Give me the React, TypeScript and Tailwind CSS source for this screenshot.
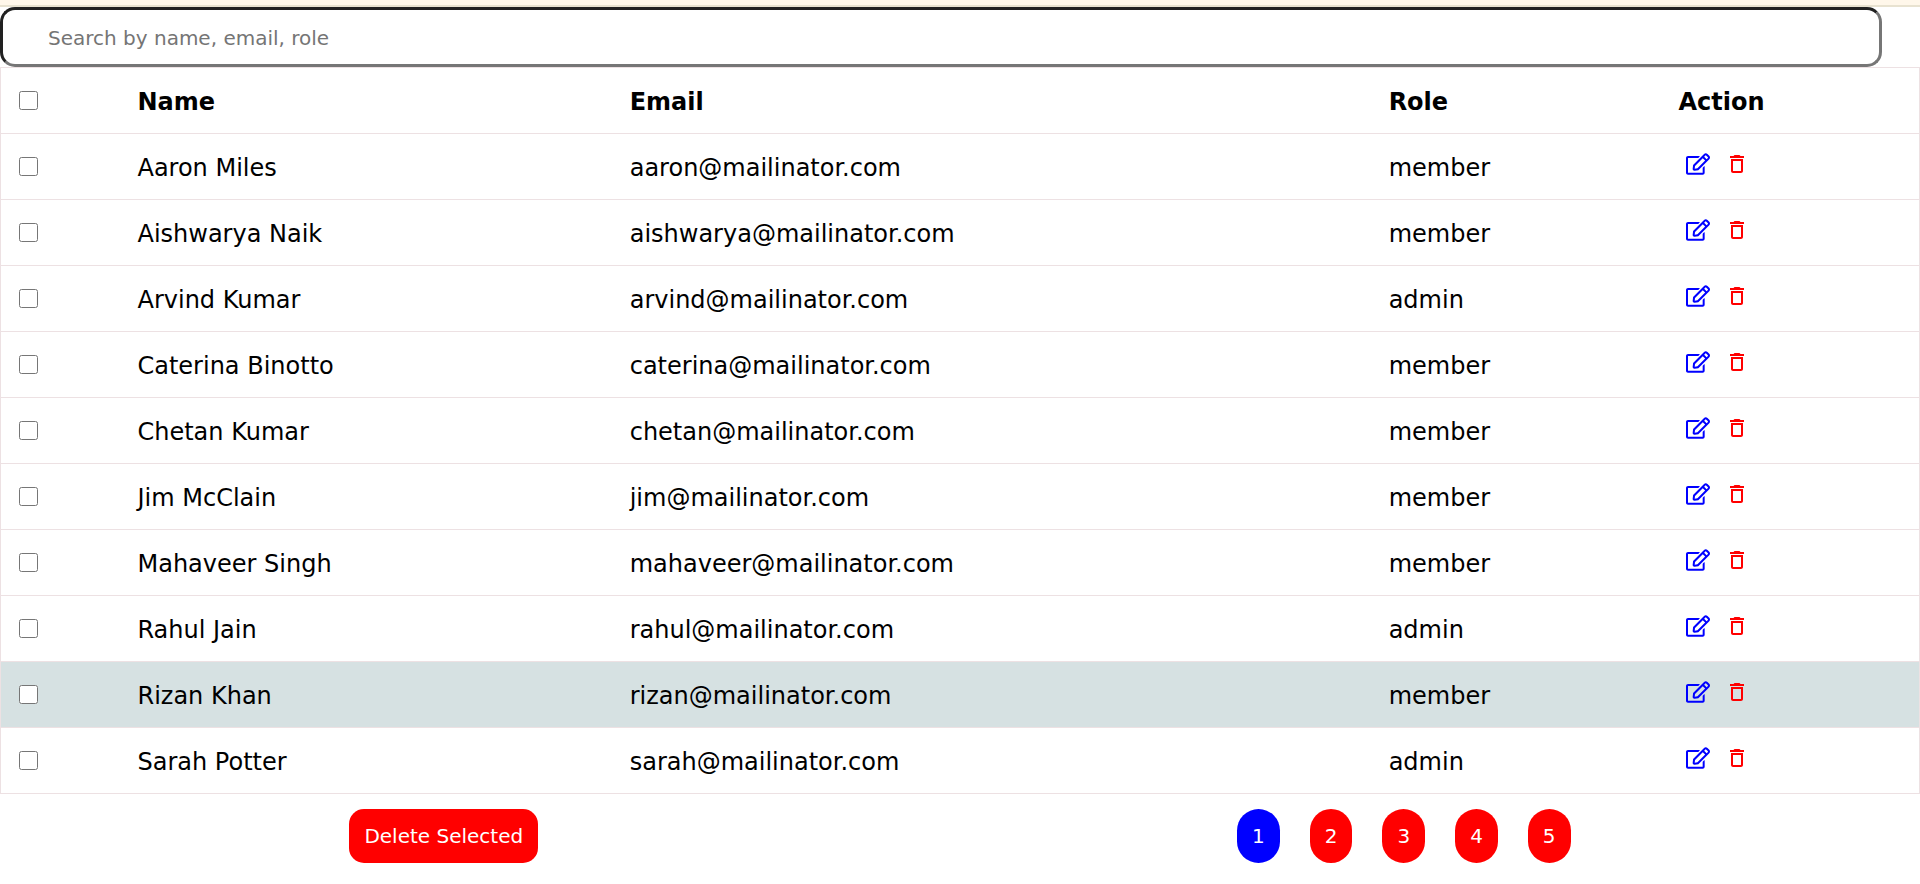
import { useState } from "react";
import { FaRegEdit } from "react-icons/fa";
import { MdDeleteOutline } from "react-icons/md";

type User = { id: number; name: string; email: string; role: string };

const users: User[] = [
  { id: 1, name: "Aaron Miles", email: "aaron@mailinator.com", role: "member" },
  { id: 2, name: "Aishwarya Naik", email: "aishwarya@mailinator.com", role: "member" },
  { id: 3, name: "Arvind Kumar", email: "arvind@mailinator.com", role: "admin" },
  { id: 4, name: "Caterina Binotto", email: "caterina@mailinator.com", role: "member" },
  { id: 5, name: "Chetan Kumar", email: "chetan@mailinator.com", role: "member" },
  { id: 6, name: "Jim McClain", email: "jim@mailinator.com", role: "member" },
  { id: 7, name: "Mahaveer Singh", email: "mahaveer@mailinator.com", role: "member" },
  { id: 8, name: "Rahul Jain", email: "rahul@mailinator.com", role: "admin" },
  { id: 9, name: "Rizan Khan", email: "rizan@mailinator.com", role: "member" },
  { id: 10, name: "Sarah Potter", email: "sarah@mailinator.com", role: "admin" },
];

const pages = [1, 2, 3, 4, 5];

function UserRow({
  user,
  active,
  checked,
  onToggle,
}: {
  user: User;
  active: boolean;
  checked: boolean;
  onToggle: () => void;
}) {
  return (
    <tr className={`h-[66px] border border-[#ede1e3] ${active ? "bg-[#d6e1e2]" : "hover:bg-[#d6e1e2]"}`}>
      <td className="px-[18px]">
        <input
          type="checkbox"
          aria-label={`Select ${user.name}`}
          checked={checked}
          onChange={onToggle}
          className="block size-[19px]"
        />
      </td>
      <td className="px-[18px] pt-[2px]">{user.name}</td>
      <td className="px-[18px] pt-[2px]">{user.email}</td>
      <td className="px-[18px] pt-[2px]">{user.role}</td>
      <td className="px-[18px]">
        <div className="flex items-center gap-[15px] pb-[6px] pl-2">
          <button type="button" aria-label={`Edit ${user.name}`} className="text-[#0000ff]">
            <FaRegEdit className="block size-6" />
          </button>
          <button type="button" aria-label={`Delete ${user.name}`} className="text-[#ff0000]">
            <MdDeleteOutline className="block size-6" />
          </button>
        </div>
      </td>
    </tr>
  );
}

export default function App() {
  const [selected, setSelected] = useState<number[]>([]);
  const [page, setPage] = useState(1);
  const [query, setQuery] = useState("");

  const visible = users.filter((u) =>
    `${u.name} ${u.email} ${u.role}`.toLowerCase().includes(query.toLowerCase()),
  );
  const toggle = (id: number) =>
    setSelected((s) => (s.includes(id) ? s.filter((x) => x !== id) : [...s, id]));
  const allSelected = visible.length > 0 && visible.every((u) => selected.includes(u.id));

  return (
    <div className="bg-white font-['Verdana','DejaVu_Sans',sans-serif] text-2xl text-black">
      <header className="h-[7px] border-b-2 border-[#e8e2d0] bg-[#fff7ea]" />
      <input
        type="text"
        aria-label="Search users"
        placeholder="Search by name, email, role"
        value={query}
        onChange={(e) => setQuery(e.target.value)}
        className="block h-[60px] w-[98%] rounded-[15px] border-[3px] [border-style:inset] border-[#767676] bg-white px-[45px] pt-[2px] text-xl placeholder:text-[#757575]"
      />
      <table className="w-full table-fixed border-collapse border border-[#ede1e3] text-left">
        <colgroup>
          <col className="w-[6.2%]" />
          <col className="w-[25.65%]" />
          <col className="w-[39.55%]" />
          <col className="w-[15.1%]" />
          <col />
        </colgroup>
        <thead>
          <tr className="h-[66px] border border-[#ede1e3]">
            <th className="px-[18px]">
              <input
                type="checkbox"
                aria-label="Select all"
                checked={allSelected}
                onChange={() => setSelected(allSelected ? [] : visible.map((u) => u.id))}
                className="block size-[19px]"
              />
            </th>
            <th className="px-[18px] pt-[2px]">Name</th>
            <th className="px-[18px] pt-[2px]">Email</th>
            <th className="px-[18px] pt-[2px]">Role</th>
            <th className="px-[18px] pt-[2px]">Action</th>
          </tr>
        </thead>
        <tbody>
          {visible.map((u) => (
            <UserRow
              key={u.id}
              user={u}
              active={u.id === 9}
              checked={selected.includes(u.id)}
              onToggle={() => toggle(u.id)}
            />
          ))}
        </tbody>
      </table>
      <div className="flex justify-around py-[15px] text-xl text-white">
        <button type="button" className="h-[54px] rounded-[15px] bg-[#ff0000] px-[15px]">
          Delete Selected
        </button>
        <nav aria-label="Pagination" className="flex gap-[30px]">
          {pages.map((p) => (
            <button
              key={p}
              type="button"
              onClick={() => setPage(p)}
              className={`h-[54px] rounded-[22px] px-[15px] ${p === page ? "bg-[#0000ff]" : "bg-[#ff0000]"}`}
            >
              {p}
            </button>
          ))}
        </nav>
      </div>
    </div>
  );
}
